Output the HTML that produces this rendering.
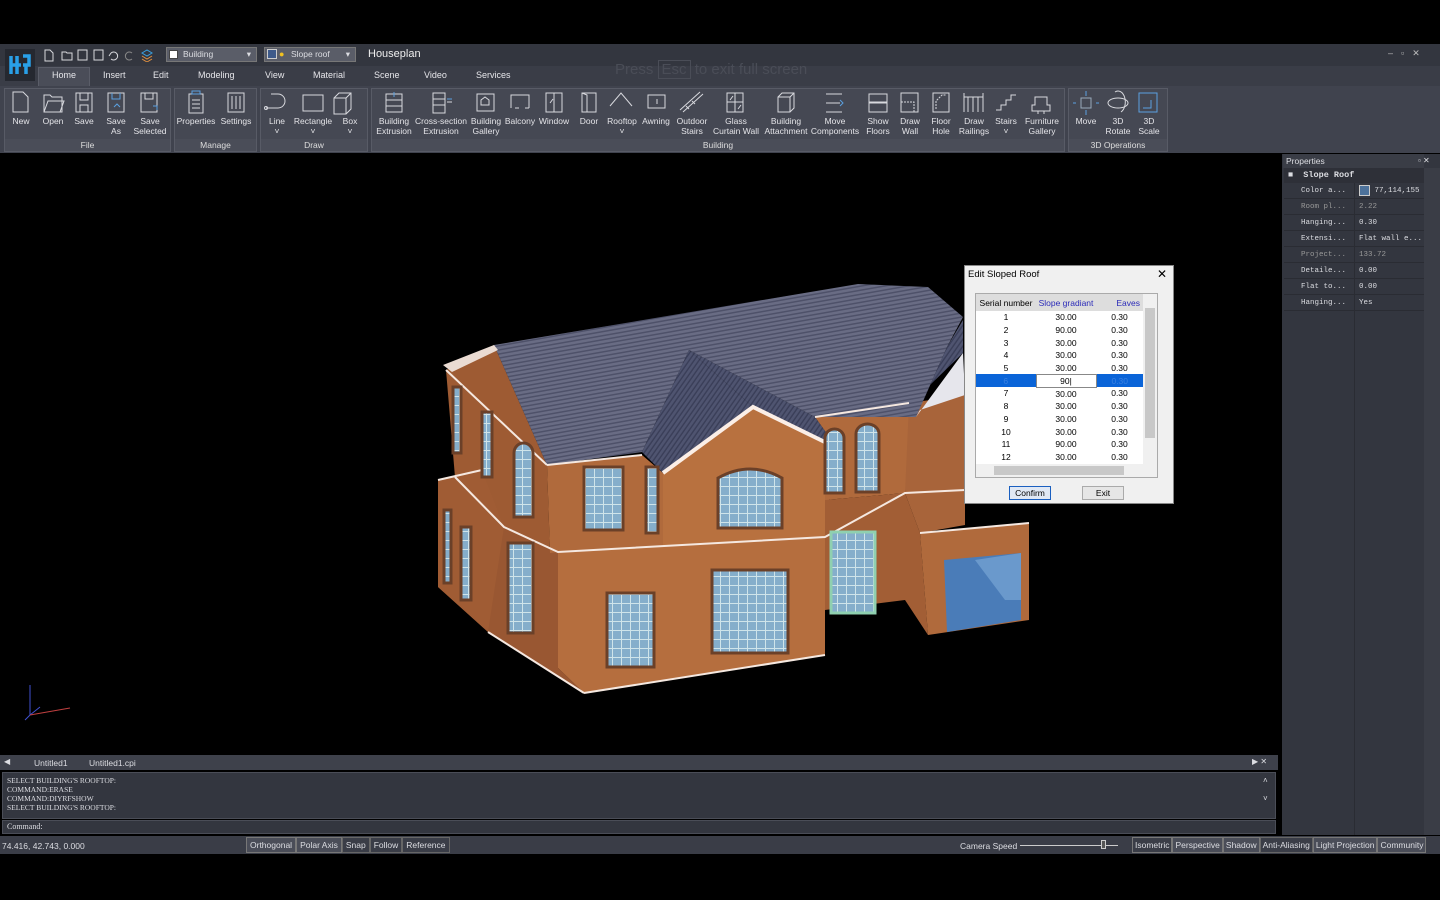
<!DOCTYPE html>
<html><head><meta charset="utf-8"><style>
*{box-sizing:border-box;margin:0;padding:0}
body{width:1440px;height:900px;background:#000;font-family:"Liberation Sans",sans-serif;color:#dcdde2;position:relative;overflow:hidden;font-size:9px}
.abs{position:absolute}
#title{left:0;top:44px;width:1440px;height:22px;background:#33363f}
#tabs{left:0;top:66px;width:1440px;height:20px;background:#3a3d47}
#ribbon{left:0;top:86px;width:1440px;height:67px;background:#40434e}
.tab{position:absolute;top:70px;font-size:9px;color:#e6e6ea}
.grp{position:absolute;top:88px;height:64px;border:1px solid #585b66;background:#454853}
.glab{position:absolute;bottom:0;left:0;right:0;height:12px;background:#4a4d58;text-align:center;font-size:8.5px;line-height:12px;color:#ddd}
.btn{position:absolute;top:28px;font-size:8.5px;text-align:center;line-height:10px;color:#e4e4e8;white-space:nowrap;transform:translateX(-50%)}
svg.i{stroke:#d8d9de;fill:none;stroke-width:1}
#props{left:1282px;top:154px;width:158px;height:681px;background:#33363f}
.pr{position:absolute;left:2px;width:140px;height:16px;border-bottom:1px solid #2a2c33;font-family:"Liberation Mono",monospace;font-size:7.5px;line-height:16px;color:#dcdde2;overflow:hidden;white-space:nowrap}
.pr span{position:absolute;left:70px;top:0;width:70px;height:16px;padding-left:4px;border-left:1px solid #2a2c33;background:#33363f}
#dlg{left:964px;top:265px;width:210px;height:239px;background:#f0f0f0;border:1px solid #888;color:#000}
table{border-collapse:collapse;font-size:8.5px}
td{height:12.7px;padding:0;text-align:center}
</style></head><body>
<div id="title" class="abs"></div>
<div id="tabs" class="abs"></div>
<div id="ribbon" class="abs"></div>
<div class="abs" style="left:5px;top:49px;width:30px;height:32px;background:#252830"></div>
<svg class="abs" style="left:9px;top:54px" width="22" height="22"><path d="M2 2v18M8 2v18M2 11h10M14 2h6v9h-6M17 11v9" stroke="#29a0e8" stroke-width="3.5" fill="none"/></svg>
<svg class="abs i" style="left:42px;top:48px" width="115" height="14"><path d="M3 2h5l3 3v8H3z"/><path d="M20 4h4l1 1h5v7H20z"/><rect x="36" y="2" width="9" height="10"/><rect x="52" y="2" width="9" height="10"/><path d="M69 5a4 4 0 1 1 0 6M69 5l-2 3"/><path d="M90 5a4 4 0 1 0 0 6" stroke="#888"/><path d="M100 5l5-3 5 3-5 3z" stroke="#3aa0e0"/><path d="M100 8l5 3 5-3M100 11l5 3 5-3" stroke="#e09040"/></svg>
<div class="abs" style="left:166px;top:47px;width:91px;height:15px;background:#5a5d68;border:1px solid #777;font-size:8.5px;line-height:13px;padding-left:16px">Building<span style="position:absolute;right:5px">▾</span></div>
<div class="abs" style="left:169px;top:50px;width:9px;height:9px;background:#fff;border:1px solid #444"></div>
<div class="abs" style="left:264px;top:47px;width:92px;height:15px;background:#5a5d68;border:1px solid #777;font-size:8.5px;line-height:13px;padding-left:26px">Slope roof<span style="position:absolute;right:5px">▾</span></div>
<div class="abs" style="left:267px;top:49px;width:10px;height:10px;background:#3e5a8a;border:1px solid #ccc"></div>
<div class="abs" style="left:279px;top:49px;font-size:9px;color:#f0c020">●</div>
<div class="abs" style="left:368px;top:48px;font-size:11px;color:#eee">Houseplan</div>
<div class="abs" style="left:615px;top:61px;font-size:15px;color:#4a4d57">Press <span style="border:1px solid #4a4d57;padding:0 3px">Esc</span> to exit full screen</div>
<div class="abs" style="left:1388px;top:48px;font-size:9px;color:#bbb;letter-spacing:8px">–▫✕</div>
<div class="abs" style="left:38px;top:67px;width:52px;height:19px;background:#4a4d58;border:1px solid #5a5d68;border-bottom:none"></div>
<div class="tab" style="left:52px">Home</div><div class="tab" style="left:103px">Insert</div><div class="tab" style="left:153px">Edit</div><div class="tab" style="left:198px">Modeling</div><div class="tab" style="left:265px">View</div><div class="tab" style="left:313px">Material</div><div class="tab" style="left:374px">Scene</div><div class="tab" style="left:424px">Video</div><div class="tab" style="left:476px">Services</div>

<div class="grp" style="left:4px;width:167px"><div class="glab">File</div></div>
<div class="grp" style="left:174px;width:83px"><div class="glab">Manage</div></div>
<div class="grp" style="left:260px;width:108px"><div class="glab">Draw</div></div>
<div class="grp" style="left:371px;width:694px"><div class="glab">Building</div></div>
<div class="grp" style="left:1068px;width:100px"><div class="glab">3D Operations</div></div>

<svg class="abs i" style="left:0;top:88px" width="1170" height="40">
<path d="M13 4h10l5 5v15H13z"/><path d="M44 7h6l2 2h10v15H44z M44 24l4-11h16l-4 11"/>
<rect x="76" y="5" width="16" height="19"/><path d="M80 5v7h8V5M80 24v-7h8v7"/>
<rect x="108" y="5" width="16" height="19"/><path d="M112 5v6h8V5M114 19l3-3 3 3" stroke="#5aa0e0"/>
<rect x="141" y="5" width="16" height="19"/><path d="M145 5v6h8V5"/><path d="M153 18h4v4" stroke="#5aa0e0"/>
<rect x="189" y="6" width="14" height="19"/><path d="M192 12h8M192 16h8M192 20h8"/><rect x="192" y="3" width="8" height="3" stroke="#5aa0e0"/>
<rect x="228" y="5" width="16" height="19"/><path d="M232 8v13M236 8v13M240 8v13"/>
<path d="M266 20h12a7 7 0 0 0 0-14h-7"/><circle cx="266" cy="20" r="1.5"/>
<rect x="303" y="7" width="20" height="16"/><path d="M334 10l5-5h12v16l-5 5h-12zM334 10h12v16M346 10l5-5"/>
<rect x="386" y="6" width="16" height="18"/><path d="M386 12h16M386 18h16"/><path d="M394 4v5" stroke="#5aa0e0"/>
<rect x="433" y="5" width="12" height="20"/><path d="M433 11h12M433 17h12M447 14h5"/><path d="M447 11h5" stroke="#5aa0e0"/>
<rect x="477" y="6" width="17" height="17"/><path d="M481 17v-5l4-3 4 3v5z"/>
<path d="M511 20V7h18v13M515 20h4M525 20h4"/><rect x="546" y="5" width="16" height="19"/><path d="M554 5v19M550 15l3-4"/>
<path d="M582 5h14v19h-14zM582 5l5 2v17"/><path d="M610 18l11-13 11 13"/><rect x="648" y="7" width="17" height="13"/><path d="M657 11v5"/>
<path d="M680 22l20-18M683 24l20-18M686 18l3 3M692 13l3 3"/><rect x="727" y="5" width="16" height="19"/><path d="M735 5v19M727 14h16M730 12l3-4M738 21l3-4"/>
<path d="M778 9l4-4h12v15l-4 4h-12zM778 9h12v15M790 9l4-4"/><path d="M826 6h16M826 24h16M826 15h14"/><path d="M840 12l3 3-3 3" stroke="#5aa0e0"/>
<rect x="869" y="6" width="18" height="8"/><rect x="869" y="15" width="18" height="9"/><rect x="901" y="5" width="17" height="19"/><path d="M901 14h13v10" stroke-dasharray="2 1"/>
<rect x="933" y="5" width="16" height="19"/><path d="M936 21v-8l6-6h4" stroke-dasharray="2 1"/>
<path d="M964 5v19M983 5v19M964 9h19M968 9v15M973 9v15M978 9v15"/><path d="M996 22h5v-5h5v-5h5v-5h5"/>
<path d="M1035 9h12v8h3v6h-18v-6h3zM1038 23v3M1044 23v3"/>
<rect x="1081" y="10" width="10" height="10" stroke="#9ab"/><path d="M1086 3v5M1086 22v5M1076 15h-3M1099 15h-3" stroke="#5aa0e0"/>
<ellipse cx="1118" cy="15" rx="10" ry="5"/><path d="M1115 4a6 9 0 0 1 6 20"/>
<rect x="1139" y="5" width="18" height="19" stroke="#5aa0e0"/><path d="M1143 20h8v-8" stroke="#5aa0e0"/>
</svg>
<div class="abs" style="left:0;top:88px;width:1170px;height:60px">
<div class="btn" style="left:21px">New</div><div class="btn" style="left:53px">Open</div><div class="btn" style="left:84px">Save</div><div class="btn" style="left:116px">Save<br>As</div><div class="btn" style="left:150px">Save<br>Selected</div>
<div class="btn" style="left:196px">Properties</div><div class="btn" style="left:236px">Settings</div>
<div class="btn" style="left:277px">Line<br>˅</div><div class="btn" style="left:313px">Rectangle<br>˅</div><div class="btn" style="left:350px">Box<br>˅</div>
<div class="btn" style="left:394px">Building<br>Extrusion</div><div class="btn" style="left:441px">Cross-section<br>Extrusion</div><div class="btn" style="left:486px">Building<br>Gallery</div><div class="btn" style="left:520px">Balcony</div><div class="btn" style="left:554px">Window</div><div class="btn" style="left:589px">Door</div><div class="btn" style="left:622px">Rooftop<br>˅</div><div class="btn" style="left:656px">Awning</div><div class="btn" style="left:692px">Outdoor<br>Stairs</div><div class="btn" style="left:736px">Glass<br>Curtain Wall</div><div class="btn" style="left:786px">Building<br>Attachment</div><div class="btn" style="left:835px">Move<br>Components</div><div class="btn" style="left:878px">Show<br>Floors</div><div class="btn" style="left:910px">Draw<br>Wall</div><div class="btn" style="left:941px">Floor<br>Hole</div><div class="btn" style="left:974px">Draw<br>Railings</div><div class="btn" style="left:1006px">Stairs<br>˅</div><div class="btn" style="left:1042px">Furniture<br>Gallery</div>
<div class="btn" style="left:1086px">Move</div><div class="btn" style="left:1118px">3D<br>Rotate</div><div class="btn" style="left:1149px">3D<br>Scale</div>
</div>

<svg class="abs" style="left:0;top:154px" width="1280" height="600">
<defs>
<pattern id="tile" width="6" height="4" patternUnits="userSpaceOnUse" patternTransform="rotate(-10)"><rect width="6" height="4" fill="#696c84"/><rect y="2.5" width="6" height="1.5" fill="#4e5169"/></pattern>
<pattern id="tile2" width="4" height="6" patternUnits="userSpaceOnUse" patternTransform="rotate(35)"><rect width="4" height="6" fill="#4f5470"/><rect x="2.6" width="1.4" height="6" fill="#3a3e58"/></pattern>
<pattern id="win" width="9" height="9" patternUnits="userSpaceOnUse"><rect width="9" height="9" fill="#85aecb"/><path d="M0 0.5h9M0.5 0v9" stroke="#cfe4ea" stroke-width="1"/></pattern>
</defs>
<g transform="translate(0,-154)">
<polygon points="446,370 494,345 547,465 550,553 504,527 455,477" fill="#9e5b33"/>
<polygon points="438,480 455,477 504,527 558,552 558,668 584,693 488,632 438,587" fill="#995732"/>
<polygon points="438,480 482,470 504,527 488,632 438,587" fill="#a05c34"/>
<polygon points="547,465 642,455 663,473 663,560 558,552 550,553" fill="#b06a3c"/>
<polygon points="663,473 753,407 835,445 825,537 663,560" fill="#b8713f"/>
<polygon points="558,552 825,537 825,655 584,693 558,668" fill="#b56e3e"/>
<polygon points="815,417 909,403 916,417 905,493 825,500 825,445 835,445" fill="#b06a3c"/>
<polygon points="825,500 905,493 920,533 928,635 905,600 825,610" fill="#a25e35"/>
<polygon points="909,403 965,395 965,525 920,533 905,493" fill="#a8643a"/>
<polygon points="920,533 1029,523 1029,620 928,635" fill="#b06a3c"/>
<polygon points="944,560 1021,553 1021,620 947,632" fill="#4a7cb8"/>
<polygon points="975,560 1021,553 1021,600 1005,600" fill="#6a99cc"/>
<polygon points="494,345 858,284 928,287 963,317 947,347 916,417 815,417 689,350 642,452 547,465" fill="url(#tile)"/>
<polygon points="689,350 642,452 663,473 753,407" fill="url(#tile2)"/>
<polygon points="689,350 753,407 835,445 815,417" fill="url(#tile2)"/>
<polygon points="947,347 963,320 963,353 930,385 916,417" fill="url(#tile2)"/>
<polygon points="916,417 963,353 965,395 920,410" fill="#e6e6ec"/>
<polygon points="443,365 494,345 498,350 452,372" fill="#eadbd2"/>
<path d="M547,465 L642,455 M815,417 L909,403 M455,477 L504,527 L558,552 L825,537 L905,493 L965,490 M438,480 L482,470 M446,370 L547,465 M920,533 L1029,523 M584,693 L825,655 M488,632 L584,693" stroke="#f5e8e0" stroke-width="2" fill="none"/>
<path d="M663,473 L753,407 L835,447" stroke="#fbeee6" stroke-width="4" fill="none"/>
<g stroke="#6b4028" stroke-width="3" fill="url(#win)">
<rect x="453" y="387" width="8" height="66"/><rect x="482" y="412" width="10" height="65"/>
<path d="M514 517v-64a9.5 10 0 0 1 19 0v64z"/>
<rect x="584" y="467" width="39" height="63"/><rect x="646" y="467" width="12" height="66"/>
<path d="M718 528v-50q32 -18 64 0v50z"/>
<path d="M825 493v-55a9.5 9 0 0 1 19 0v55z"/><path d="M856 492v-58a11.5 10 0 0 1 23 0v58z"/>
<rect x="444" y="510" width="7" height="73"/><rect x="461" y="527" width="10" height="73"/>
<rect x="508" y="543" width="25" height="90"/>
<rect x="607" y="593" width="47" height="74"/><rect x="712" y="570" width="76" height="83"/>
</g>
<rect x="831" y="532" width="44" height="81" fill="url(#win)" stroke="#8fd0b0" stroke-width="3"/>
<path d="M30 685v30l-5 5M30 715l10-8" stroke="#4050d0" stroke-width="1" fill="none"/><path d="M30 715l40-7" stroke="#c04040"/>
</g></svg>

<div id="props" class="abs">
<div class="abs" style="left:1px;top:0;width:141px;height:14px;background:#3a3d46"></div>
<div class="abs" style="left:4px;top:2px;font-size:8.5px">Properties</div><div class="abs" style="left:136px;top:2px;font-size:8px">▫ ✕</div>
<div class="abs" style="left:142px;top:14px;width:16px;height:667px;background:#3a3d46"></div>
<div class="abs" style="left:2px;top:14px;width:140px;height:15px;background:#2e3038;font-family:'Liberation Mono',monospace;font-weight:bold;font-size:8.5px;line-height:15px;padding-left:4px">■ &nbsp;Slope Roof</div>
<div class="pr" style="top:29px;padding-left:17px">Color a...<span><i style="display:inline-block;width:11px;height:11px;background:#4d729b;border:1px solid #ccc;vertical-align:middle"></i> 77,114,155</span></div>
<div class="pr" style="top:45px;padding-left:17px;color:#999">Room pl...<span>2.22</span></div>
<div class="pr" style="top:61px;padding-left:17px">Hanging...<span>0.30</span></div>
<div class="pr" style="top:77px;padding-left:17px">Extensi...<span>Flat wall e...</span></div>
<div class="pr" style="top:93px;padding-left:17px;color:#999">Project...<span>133.72</span></div>
<div class="pr" style="top:109px;padding-left:17px">Detaile...<span>0.00</span></div>
<div class="pr" style="top:125px;padding-left:17px">Flat to...<span>0.00</span></div>
<div class="pr" style="top:141px;padding-left:17px">Hanging...<span>Yes</span></div>
<div class="abs" style="left:72px;top:157px;width:1px;height:524px;background:#2a2c33"></div>
</div>

<div id="dlg" class="abs">
<div class="abs" style="left:3px;top:3px;font-size:9.5px">Edit Sloped Roof</div><div class="abs" style="left:192px;top:1px;font-size:12px">✕</div>
<div class="abs" style="left:10px;top:27px;width:183px;height:185px;border:1px solid #aaa;background:#fff;overflow:hidden">
<table style="width:167px"><tr style="background:#ddd"><td style="height:17px;width:60px">Serial number</td><td style="color:#2a2ab8;width:60px">Slope gradiant</td><td style="color:#2a2ab8;text-align:right;padding-right:3px">Eaves</td></tr>
<tr><td>1</td><td>30.00</td><td>0.30</td></tr><tr><td>2</td><td>90.00</td><td>0.30</td></tr><tr><td>3</td><td>30.00</td><td>0.30</td></tr><tr><td>4</td><td>30.00</td><td>0.30</td></tr><tr><td>5</td><td>30.00</td><td>0.30</td></tr>
<tr style="background:#0a64d8;color:#3a80e0"><td>6</td><td style="background:#fff;color:#000;border:1px solid #888">90|</td><td>0.30</td></tr>
<tr><td>7</td><td>30.00</td><td>0.30</td></tr><tr><td>8</td><td>30.00</td><td>0.30</td></tr><tr><td>9</td><td>30.00</td><td>0.30</td></tr><tr><td>10</td><td>30.00</td><td>0.30</td></tr><tr><td>11</td><td>90.00</td><td>0.30</td></tr><tr><td>12</td><td>30.00</td><td>0.30</td></tr></table>
<div class="abs" style="right:0;top:0;width:14px;height:170px;background:#f0f0f0"><div style="margin:14px 2px;height:130px;background:#c8c8c8"></div></div>
<div class="abs" style="left:0;bottom:0;width:183px;height:13px;background:#f0f0f0"><div style="margin:2px 18px;width:130px;height:9px;background:#c8c8c8"></div></div>
</div>
<div class="abs" style="left:44px;top:220px;width:42px;height:14px;border:1px solid #1a5fc0;background:#e0e8f4;font-size:8.5px;text-align:center;line-height:12px">Confirm</div>
<div class="abs" style="left:117px;top:220px;width:42px;height:14px;border:1px solid #aaa;background:#e6e6e6;font-size:8.5px;text-align:center;line-height:12px">Exit</div>
</div>

<div class="abs" style="left:0;top:755px;width:1278px;height:15px;background:#3e414b"></div>
<div class="abs" style="left:4px;top:757px;font-size:8px">◀</div>
<div class="abs" style="left:34px;top:758px;font-size:8.5px">Untitled1</div><div class="abs" style="left:89px;top:758px;font-size:8.5px">Untitled1.cpi</div>
<div class="abs" style="left:1252px;top:757px;font-size:8px">▶ ✕</div>
<div class="abs" style="left:2px;top:772px;width:1274px;height:47px;background:#33363f;border:1px solid #4a4d57;font-family:'Liberation Serif',serif;font-size:7.5px;line-height:9px;padding:3px 4px">SELECT BUILDING'S ROOFTOP:<br>COMMAND:ERASE<br>COMMAND:DIYRFSHOW<br>SELECT BUILDING'S ROOFTOP:</div>
<div class="abs" style="left:1263px;top:776px;font-size:8px">˄<br><br>˅</div>
<div class="abs" style="left:2px;top:820px;width:1274px;height:14px;background:#33363f;border:1px solid #4a4d57;font-family:'Liberation Serif',serif;font-size:8px;line-height:12px;padding-left:4px">Command:</div>
<div class="abs" style="left:0;top:836px;width:1440px;height:18px;background:#3a3d47"></div>
<div class="abs" style="left:2px;top:841px;font-size:8.5px">74.416, 42.743, 0.000</div>
<div class="abs" style="left:246px;top:837px;height:16px;display:flex;font-size:8.5px;line-height:14px">
<span style="border:1px solid #777;padding:0 3px;background:#4a4d58">Orthogonal</span><span style="border:1px solid #777;padding:0 3px;background:#4a4d58">Polar Axis</span><span style="border:1px solid #666;padding:0 3px">Snap</span><span style="border:1px solid #666;padding:0 3px">Follow</span><span style="border:1px solid #666;padding:0 3px">Reference</span></div>
<div class="abs" style="left:960px;top:841px;font-size:8.5px">Camera Speed</div>
<div class="abs" style="left:1020px;top:845px;width:98px;height:1px;background:#ccc"></div>
<div class="abs" style="left:1101px;top:840px;width:5px;height:9px;border:1px solid #ccc;background:#555"></div>
<div class="abs" style="left:1132px;top:837px;height:16px;display:flex;font-size:8.5px;line-height:14px">
<span style="border:1px solid #777;padding:0 2px">Isometric</span><span style="border:1px solid #777;padding:0 2px;background:#4a4d58">Perspective</span><span style="border:1px solid #777;padding:0 2px;background:#4a4d58">Shadow</span><span style="border:1px solid #666;padding:0 2px">Anti-Aliasing</span><span style="border:1px solid #777;padding:0 2px;background:#4a4d58">Light Projection</span><span style="border:1px solid #777;padding:0 2px;background:#4a4d58">Community</span></div>
</body></html>
